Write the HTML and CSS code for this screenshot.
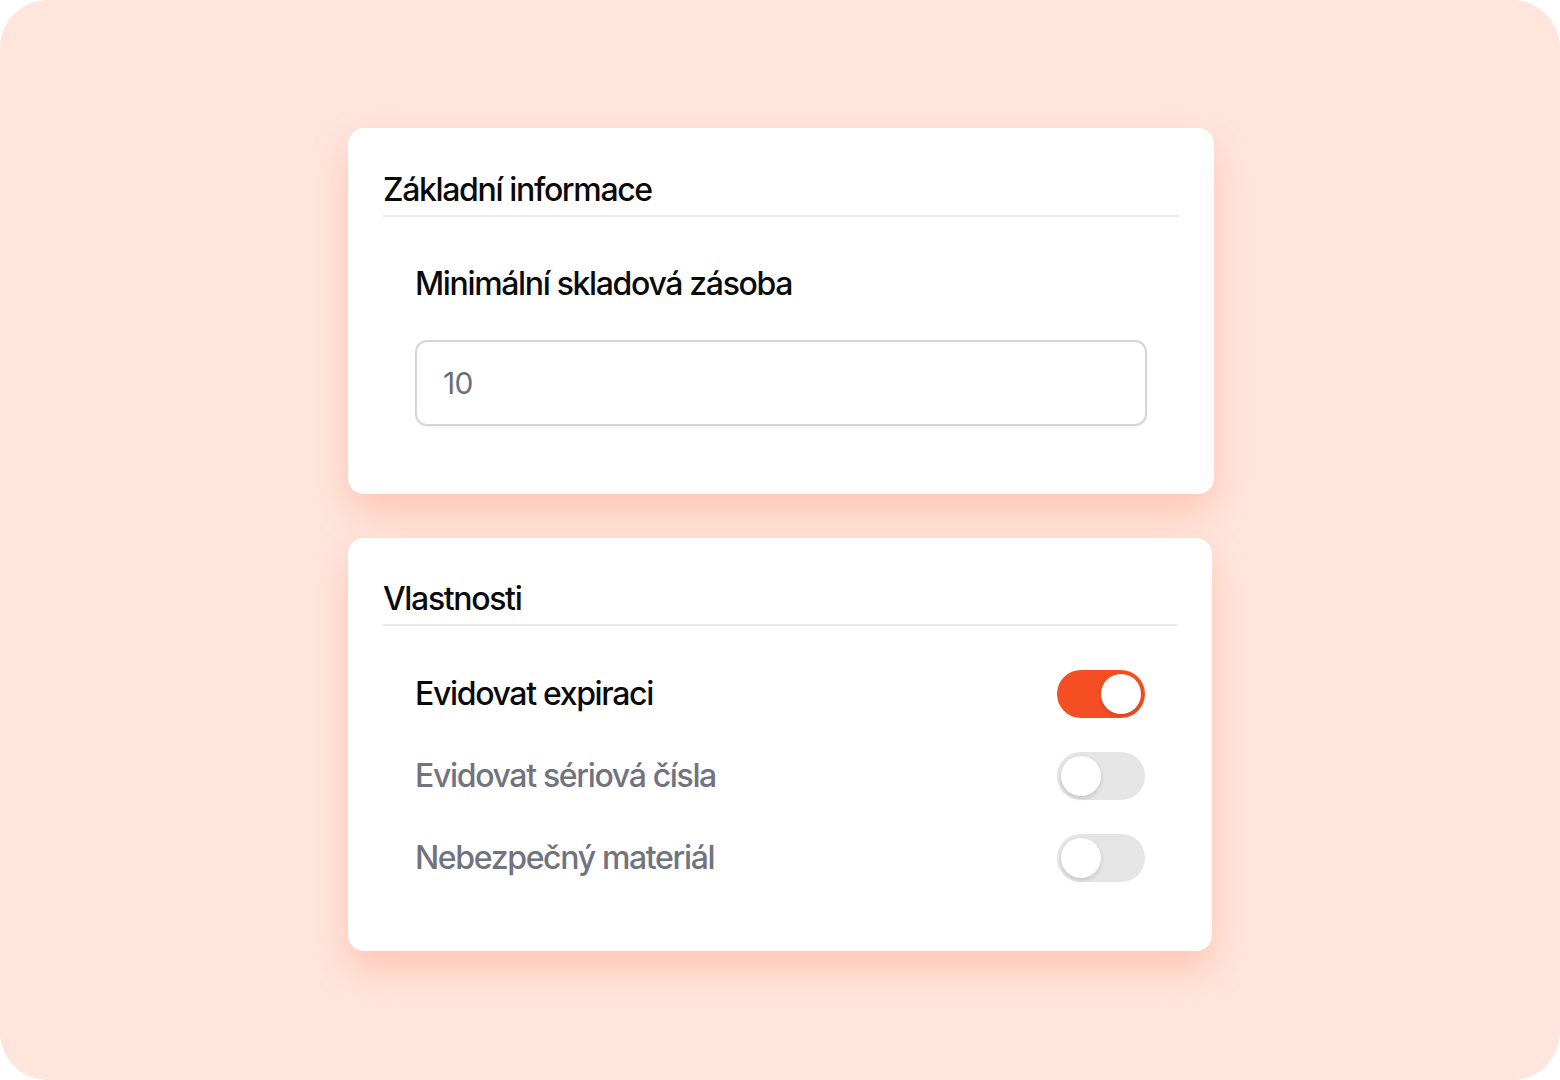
FILE: index.html
```html
<!DOCTYPE html>
<html lang="cs">
<head>
<meta charset="utf-8">
<title>Nastavení položky</title>
<link rel="stylesheet" href="styles.css">
</head>
<body>
<div class="canvas">
  <div class="stack">
    <section class="card card-basic">
      <h2 class="card-title">Základní informace</h2>
      <div class="field">
        <label class="field-label" for="minstock">Minimální skladová zásoba</label>
        <div class="input" id="minstock">10</div>
      </div>
    </section>
    <section class="card card-props">
      <h2 class="card-title">Vlastnosti</h2>
      <div class="rows">
        <div class="row">
          <span class="row-label active">Evidovat expiraci</span>
          <span class="toggle on"><span class="knob"></span></span>
        </div>
        <div class="row">
          <span class="row-label">Evidovat sériová čísla</span>
          <span class="toggle"><span class="knob"></span></span>
        </div>
        <div class="row">
          <span class="row-label">Nebezpečný materiál</span>
          <span class="toggle"><span class="knob"></span></span>
        </div>
      </div>
    </section>
  </div>
</div>
</body>
</html>
```

FILE: styles.css
```css
* { box-sizing: border-box; }
html, body { margin: 0; padding: 0; background: #ffffff; }
body {
  font-family: Inter, "Noto Sans", "Liberation Sans", sans-serif;
  width: 1560px;
  height: 1080px;
}
.canvas {
  width: 1560px;
  height: 1080px;
  background: #ffe5dc;
  border-radius: 48px;
  padding-top: 128px;
  display: flex;
  justify-content: center;
}
.stack {
  display: flex;
  flex-direction: column;
  gap: 44px;
  width: 866px;
  margin-left: 2px;
}
.card {
  background: #ffffff;
  border-radius: 16px;
  padding: 42px 35px 68px 35px;
  box-shadow: 0 18px 36px rgba(255, 150, 115, 0.38);
}
.card-props {
  width: 864px;
  padding-top: 41px;
  padding-bottom: 69px;
}
.card-title {
  margin: 0;
  font-size: 32px;
  line-height: 40px;
  font-weight: 500;
  letter-spacing: -0.042em;
  color: #0a0a0a;
  padding-bottom: 5px;
  border-bottom: 2px solid #ececec;
}
.field {
  padding: 47px 32px 0 32px;
  display: flex;
  flex-direction: column;
  gap: 36px;
}
.field-label {
  font-size: 32px;
  line-height: 40px;
  font-weight: 500;
  letter-spacing: -0.042em;
  color: #0a0a0a;
}
.input {
  height: 86px;
  border: 2px solid #d6d6da;
  border-radius: 12px;
  padding: 0 26px;
  display: flex;
  align-items: center;
  font-size: 30px;
  color: #6b6f78;
  letter-spacing: -0.02em;
  box-shadow: 0 1px 2px rgba(0,0,0,0.05);
}
.rows {
  padding: 44px 32px 0 32px;
  display: flex;
  flex-direction: column;
  gap: 34px;
}
.row {
  height: 48px;
  display: flex;
  align-items: center;
  justify-content: space-between;
}
.row-label {
  font-size: 32px;
  line-height: 40px;
  font-weight: 500;
  letter-spacing: -0.042em;
  color: #71747e;
}
.row-label.active { color: #0a0a0a; }
.toggle {
  width: 88px;
  height: 48px;
  border-radius: 24px;
  background: #e5e5e5;
  padding: 4px;
  display: flex;
  justify-content: flex-start;
}
.toggle.on {
  background: #f54e22;
  justify-content: flex-end;
}
.knob {
  width: 40px;
  height: 40px;
  border-radius: 50%;
  background: #ffffff;
  box-shadow: 0 2px 4px rgba(0,0,0,0.15);
}
```
